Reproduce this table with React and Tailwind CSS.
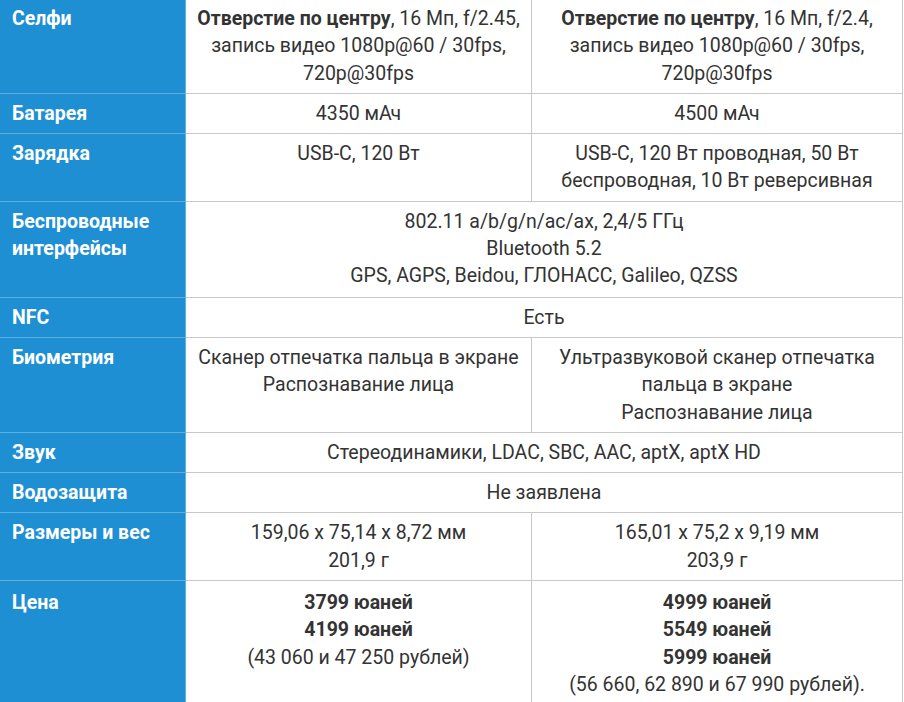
import React from "react";

const BLUE = "bg-[#1f8fd3]";

function Row({ label, first, children, extra = "" }) {
  const bt = first ? "" : "border-t";
  return (
    <div className="flex">
      <div
        className={`w-[186px] shrink-0 ${BLUE} border-r border-r-[#62b0e2] ${bt} border-t-[#5eaee0] pl-[12px] pr-1 py-[6px] ${extra} font-bold text-white`}
      >
        {label}
      </div>
      {children(bt)}
    </div>
  );
}

function Cell({ bt, wide, children, extra = "" }) {
  return (
    <div
      className={`${wide ? "w-[717px]" : "w-[346px]"} shrink-0 ${bt} border-t-[#c8c8c8] border-r border-r-[#c8c8c8] px-1 py-[6px] ${extra} text-center text-[#333]`}
    >
      {children}
    </div>
  );
}

function Cell2({ bt, children, extra = "" }) {
  return (
    <div
      className={`w-[371px] shrink-0 ${bt} border-t-[#c8c8c8] border-r border-r-[#c8c8c8] px-1 py-[6px] ${extra} text-center text-[#333]`}
    >
      {children}
    </div>
  );
}

export default function App() {
  return (
    <div
      className="w-[904px] h-[702px] overflow-hidden bg-white text-[19.5px] leading-[27.3px]"
      style={{ fontFamily: "Roboto, 'Noto Sans', sans-serif" }}
    >
      <Row label="Селфи" first extra="pt-[5px]">
        {(bt) => (
          <>
            <Cell bt={bt} extra="pt-[5px]">
              <b>Отверстие по центру</b>, 16 Мп, f/2.45,
              <br />
              запись видео 1080p@60 / 30fps,
              <br />
              720p@30fps
            </Cell>
            <Cell2 bt={bt} extra="pt-[5px]">
              <b>Отверстие по центру</b>, 16 Мп, f/2.4,
              <br />
              запись видео 1080p@60 / 30fps,
              <br />
              720p@30fps
            </Cell2>
          </>
        )}
      </Row>
      <Row label="Батарея">
        {(bt) => (
          <>
            <Cell bt={bt}>4350 мАч</Cell>
            <Cell2 bt={bt}>4500 мАч</Cell2>
          </>
        )}
      </Row>
      <Row label="Зарядка">
        {(bt) => (
          <>
            <Cell bt={bt}>USB-C, 120 Вт</Cell>
            <Cell2 bt={bt}>
              USB-C, 120 Вт проводная, 50 Вт
              <br />
              беспроводная, 10 Вт реверсивная
            </Cell2>
          </>
        )}
      </Row>
      <Row label={<>Беспроводные<br />интерфейсы</>} extra="pb-[7px]">
        {(bt) => (
          <Cell bt={bt} wide extra="pb-[7px]">
            802.11 a/b/g/n/ac/ax, 2,4/5 ГГц
            <br />
            Bluetooth 5.2
            <br />
            GPS, AGPS, Beidou, ГЛОНАСС, Galileo, QZSS
          </Cell>
        )}
      </Row>
      <Row label="NFC">
        {(bt) => (
          <Cell bt={bt} wide>
            Есть
          </Cell>
        )}
      </Row>
      <Row label="Биометрия">
        {(bt) => (
          <>
            <Cell bt={bt}>
              Сканер отпечатка пальца в экране
              <br />
              Распознавание лица
            </Cell>
            <Cell2 bt={bt}>
              Ультразвуковой сканер отпечатка
              <br />
              пальца в экране
              <br />
              Распознавание лица
            </Cell2>
          </>
        )}
      </Row>
      <Row label="Звук">
        {(bt) => (
          <Cell bt={bt} wide>
            Стереодинамики, LDAC, SBC, AAC, aptX, aptX HD
          </Cell>
        )}
      </Row>
      <Row label="Водозащита">
        {(bt) => (
          <Cell bt={bt} wide>
            Не заявлена
          </Cell>
        )}
      </Row>
      <Row label="Размеры и вес">
        {(bt) => (
          <>
            <Cell bt={bt}>
              159,06 x 75,14 x 8,72 мм
              <br />
              201,9 г
            </Cell>
            <Cell2 bt={bt}>
              165,01 x 75,2 x 9,19 мм
              <br />
              203,9 г
            </Cell2>
          </>
        )}
      </Row>
      <Row label="Цена" extra="pt-[8px] pb-[40px]">
        {(bt) => (
          <>
            <Cell bt={bt} extra="pt-[8px] pb-[40px]">
              <b>3799 юаней</b>
              <br />
              <b>4199 юаней</b>
              <br />
              (43 060 и 47 250 рублей)
            </Cell>
            <Cell2 bt={bt} extra="pt-[8px] pb-[40px]">
              <b>4999 юаней</b>
              <br />
              <b>5549 юаней</b>
              <br />
              <b>5999 юаней</b>
              <br />
              (56 660, 62 890 и 67 990 рублей).
            </Cell2>
          </>
        )}
      </Row>
    </div>
  );
}
